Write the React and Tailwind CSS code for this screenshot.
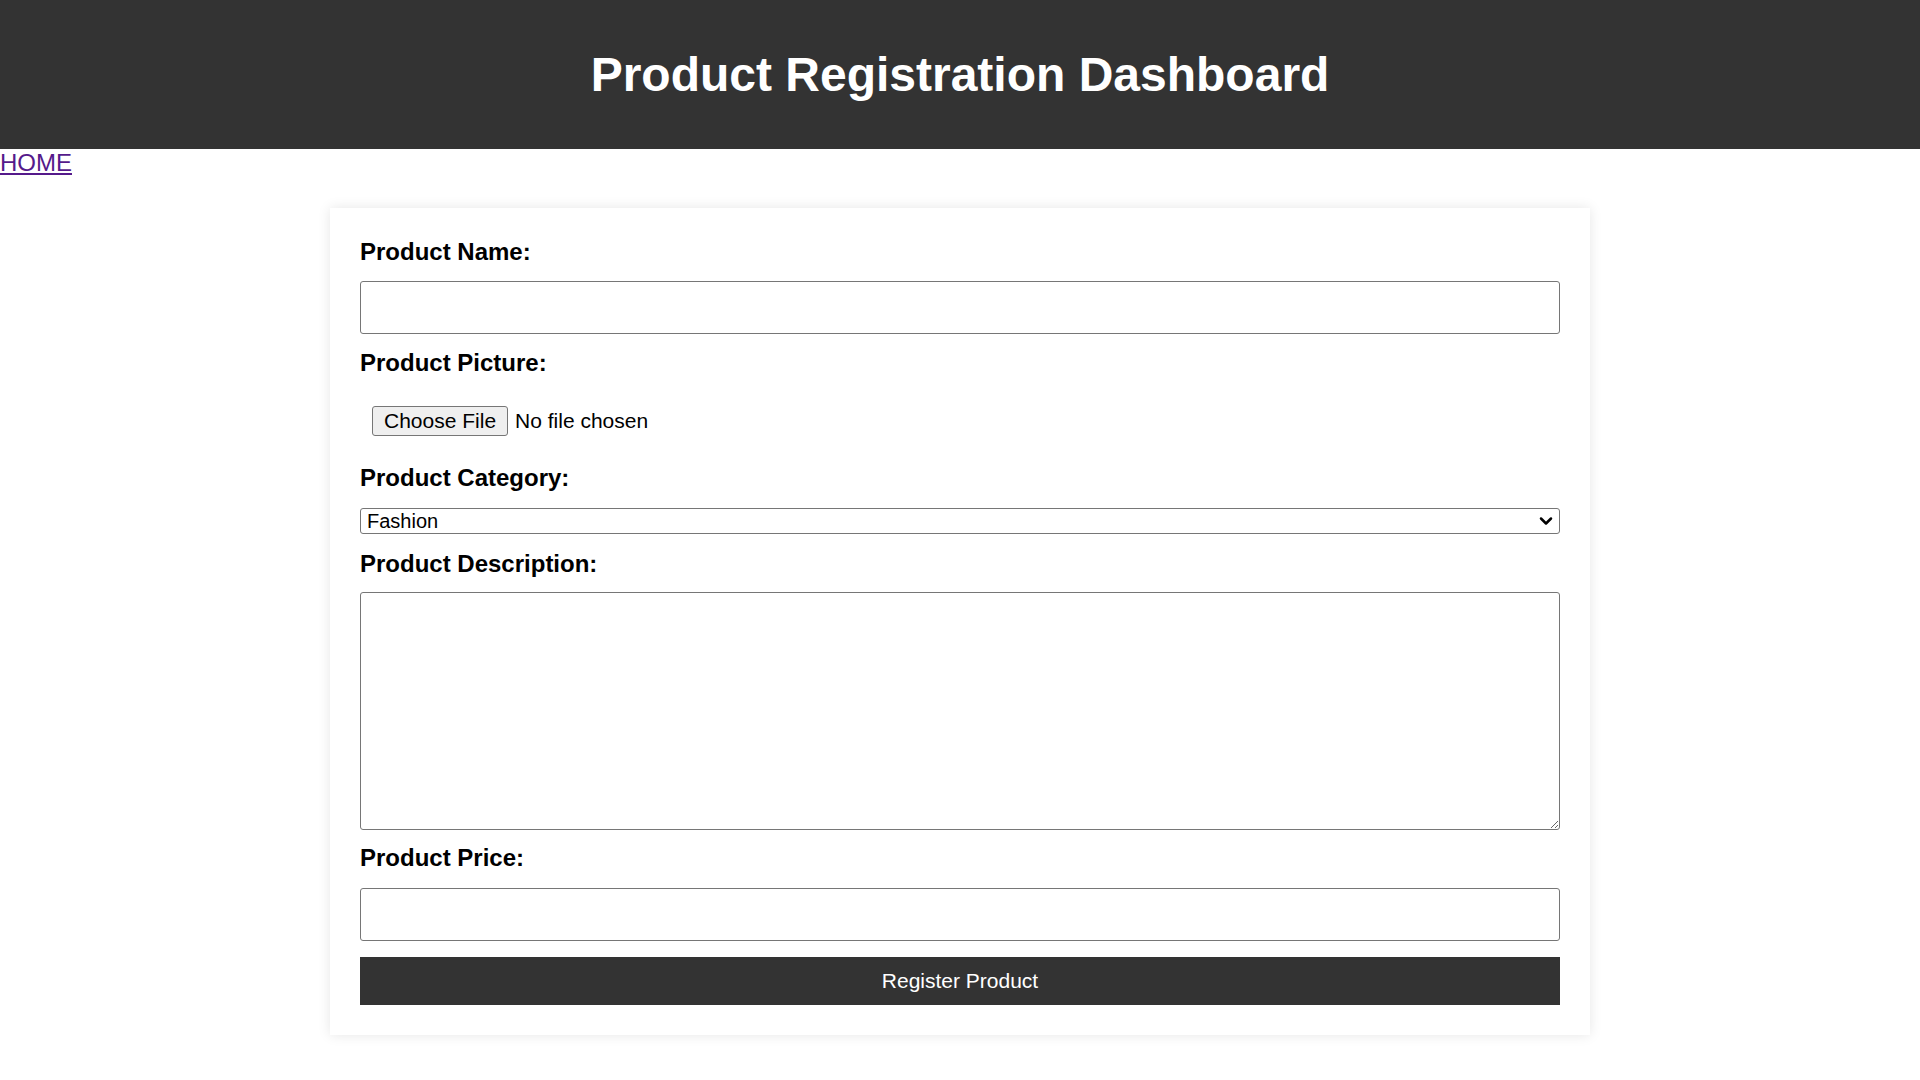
import React, { useState } from "react";
import { ChevronDown } from "lucide-react";

const categories = ["Fashion", "Electronics", "Home & Kitchen", "Books", "Sports"];

const Label = ({ htmlFor, children, className = "" }) => (
  <label
    htmlFor={htmlFor}
    className={`block text-[24px] font-bold leading-[28px] text-black ${className}`}
  >
    {children}
  </label>
);

const App = () => {
  const [form, setForm] = useState({
    name: "",
    category: "Fashion",
    description: "",
    price: "",
  });

  const update = (key) => (e) => setForm({ ...form, [key]: e.target.value });

  return (
    <div className="min-h-screen bg-white font-['Liberation_Sans',Arial,sans-serif] text-black">
      {/* Header */}
      <header className="h-[149px] bg-[#333333] flex items-center justify-center">
        <h1 className="text-[48px] font-bold leading-[55px] text-white">
          Product Registration Dashboard
        </h1>
      </header>

      <a href="#" className="inline-block text-[24px] leading-[28px] text-[#551a8b] underline">
        HOME
      </a>

      {/* Form card */}
      <div className="w-[1260px] mx-auto mt-[30px] mb-[40px] p-[30px] bg-white shadow-[0_0_12px_rgba(0,0,0,0.1)]">
        <form onSubmit={(e) => e.preventDefault()} className="flex flex-col">
          <Label htmlFor="name" className="mb-[15px]">
            Product Name:
          </Label>
          <input
            id="name"
            type="text"
            value={form.name}
            onChange={update("name")}
            className="h-[53px] w-full px-[12px] mb-[15px] text-[20px] border border-[#767676] rounded-[3px] outline-none"
          />

          <Label htmlFor="picture" className="mb-[15px]">
            Product Picture:
          </Label>
          <div className="h-[57px] mb-[15px] flex items-center pl-[12px]">
            <input
              id="picture"
              type="file"
              className="text-[21px] leading-[24px] file:mr-[7px] file:px-[11px] file:py-[2px] file:border file:border-[#767676] file:rounded-[3px] file:bg-[#efefef] file:text-black"
            />
          </div>

          <Label htmlFor="category" className="mb-[16px]">
            Product Category:
          </Label>
          <div className="relative mb-[15px]">
            <select
              id="category"
              value={form.category}
              onChange={update("category")}
              className="appearance-none h-[26px] w-full pl-[6px] text-[20px] leading-[24px] border border-[#767676] rounded-[3px] bg-white outline-none"
            >
              {categories.map((c) => (
                <option key={c}>{c}</option>
              ))}
            </select>
            <ChevronDown
              size={20}
              strokeWidth={3}
              className="absolute right-[4px] top-[3px] pointer-events-none text-black"
            />
          </div>

          <Label htmlFor="description" className="mb-[14px]">
            Product Description:
          </Label>
          <textarea
            id="description"
            value={form.description}
            onChange={update("description")}
            className="h-[238px] w-full p-[12px] mb-[14px] text-[20px] border border-[#767676] rounded-[3px] outline-none"
          />

          <Label htmlFor="price" className="mb-[16px]">
            Product Price:
          </Label>
          <input
            id="price"
            type="number"
            value={form.price}
            onChange={update("price")}
            className="h-[53px] w-full px-[12px] mb-[16px] text-[20px] border border-[#767676] rounded-[3px] outline-none"
          />

          <button
            type="submit"
            className="h-[48px] w-full bg-[#333333] text-white text-[21px] cursor-pointer"
          >
            Register Product
          </button>
        </form>
      </div>
    </div>
  );
};

export default App;
